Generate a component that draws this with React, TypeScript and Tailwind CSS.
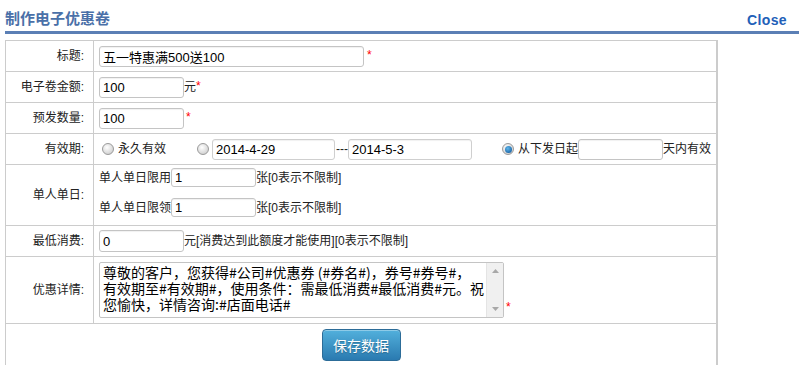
import React from "react";

const Star = ({ className = "" }: { className?: string }) => (
  <span className={"text-[#ff0000] text-[12px] leading-[12px] " + className}>*</span>
);

const Field = ({ value, className = "" }: { value: string; className?: string }) => (
  <input
    readOnly
    value={value}
    className={
      "h-[21px] border border-[#c4c4c4] rounded-[3px] pl-[3px] text-[13px] text-black bg-white outline-none shadow-[inset_0_1px_1px_rgba(0,0,0,0.06)] " +
      className
    }
  />
);

const Radio = ({ checked = false, className = "" }: { checked?: boolean; className?: string }) => (
  <span
    className={
      "w-[12px] h-[12px] rounded-full border border-[#9a9a9a] bg-[radial-gradient(circle_at_40%_35%,#ffffff,#c4c4c4)] flex items-center justify-center shrink-0 " +
      className
    }
  >
    {checked && (
      <span className="w-[7px] h-[7px] rounded-full bg-[radial-gradient(circle_at_40%_35%,#5fb6ea,#084f94)]" />
    )}
  </span>
);

const Row = ({
  label,
  className,
  contentClass = "items-center",
  children,
}: {
  label: string;
  className: string;
  contentClass?: string;
  children: React.ReactNode;
}) => (
  <div className={"flex border-b border-[#cccccc] " + className}>
    <div className="w-[88px] shrink-0 border-r border-[#cccccc] flex items-center justify-end pr-[9px] text-[12px] text-[#222]">
      {label}
    </div>
    <div className={"flex-1 flex pl-[5px] text-[12px] text-[#222] " + contentClass}>{children}</div>
  </div>
);

export default function App() {
  const msg =
    "尊敬的客户，您获得#公司#优惠券 (#券名#)，券号#券号#，\n有效期至#有效期#，使用条件：需最低消费#最低消费#元。祝\n您愉快，详情咨询:#店面电话#";
  return (
    <div className="w-[799px] h-[365px] overflow-hidden bg-white font-['Liberation_Sans','Noto_Sans_CJK_SC',sans-serif]">
      <div className="flex justify-between items-start h-[31px] pt-[9px] pl-[5px] pr-[12px]">
        <span className="text-[15px] leading-[20px] font-bold text-[#4a70a8]">制作电子优惠卷</span>
        <span className="text-[14px] leading-[20px] font-bold text-[#2260b8] mt-[1px] tracking-[0.4px]">Close</span>
      </div>
      <div className="ml-[5px] h-[3px] bg-[#5b7fb5]" />
      <div className="mt-[6px] ml-[5px] w-[713px] border-t border-l border-r-2 border-[#cccccc]">
        <Row label="标题:" className="h-[31px]">
          <Field value="五一特惠满500送100" className="w-[265px]" />
          <Star className="ml-[3px] -mt-[2px]" />
        </Row>
        <Row label="电子卷金额:" className="h-[31px]">
          <Field value="100" className="w-[85px]" />
          <span>元</span>
          <Star className="-mt-[2px]" />
        </Row>
        <Row label="预发数量:" className="h-[31px]">
          <Field value="100" className="w-[85px]" />
          <Star className="ml-[2px] -mt-[2px]" />
        </Row>
        <Row label="有效期:" className="h-[31px]">
          <Radio className="ml-[3px]" />
          <span className="ml-[4px]">永久有效</span>
          <Radio className="ml-[31px]" />
          <Field value="2014-4-29" className="ml-[3px] w-[123px] border-[#cfcfcf]" />
          <span className="w-[13px] pl-[1px] overflow-hidden">---</span>
          <Field value="2014-5-3" className="w-[124px] border-[#cfcfcf]" />
          <Radio checked className="ml-[30px]" />
          <span className="ml-[4px]">从下发日起</span>
          <Field value="" className="w-[85px] border-[#9fc3e6]" />
          <span>天内有效</span>
        </Row>
        <Row label="单人单日:" className="h-[61px]" contentClass="flex-col justify-start pt-[3px] gap-[11px]">
          <div className="flex items-center h-[19px]">
            <span>单人单日限用</span>
            <Field value="1" className="w-[85px] !h-[19px]" />
            <span>张[0表示不限制]</span>
          </div>
          <div className="flex items-center h-[19px]">
            <span>单人单日限领</span>
            <Field value="1" className="w-[85px] !h-[19px]" />
            <span>张[0表示不限制]</span>
          </div>
        </Row>
        <Row label="最低消费:" className="h-[31px]">
          <Field value="0" className="w-[85px] !h-[22px]" />
          <span>元[消费达到此额度才能使用][0表示不限制]</span>
        </Row>
        <Row label="优惠详情:" className="h-[67px]" contentClass="items-start pt-[5px]">
          <div className="flex w-[405px] h-[56px] border border-[#c4c4c4] rounded-[2px] bg-white overflow-hidden">
            <textarea
              readOnly
              wrap="off"
              value={msg}
              className="flex-1 resize-none outline-none overflow-hidden whitespace-pre pl-[3px] pt-[1px] text-[14px] leading-[16px] text-black font-['Noto_Sans_CJK_SC',sans-serif]"
            />
            <div className="w-[17px] bg-[#f0f0f0] border-l border-[#e4e4e4] flex flex-col justify-between items-center py-[6px]">
              <svg width="7" height="4" viewBox="0 0 7 4">
                <path d="M0 4 L3.5 0 L7 4 Z" fill="#a8a8a8" />
              </svg>
              <svg width="7" height="4" viewBox="0 0 7 4">
                <path d="M0 0 L3.5 4 L7 0 Z" fill="#a8a8a8" />
              </svg>
            </div>
          </div>
          <Star className="ml-[2px] mt-[39px]" />
        </Row>
        <div className="h-[60px] flex justify-center pt-[5px]">
          <button className="w-[79px] h-[32px] rounded-[4px] border border-[#2c6c98] bg-[linear-gradient(#52b0dc,#2a7ab0)] shadow-[inset_0_1px_0_rgba(255,255,255,0.35)] text-white text-[14px] leading-[30px] font-['Noto_Sans_CJK_SC',sans-serif] [text-shadow:0_1px_1px_rgba(0,0,0,0.25)]">
            保存数据
          </button>
        </div>
      </div>
    </div>
  );
}
